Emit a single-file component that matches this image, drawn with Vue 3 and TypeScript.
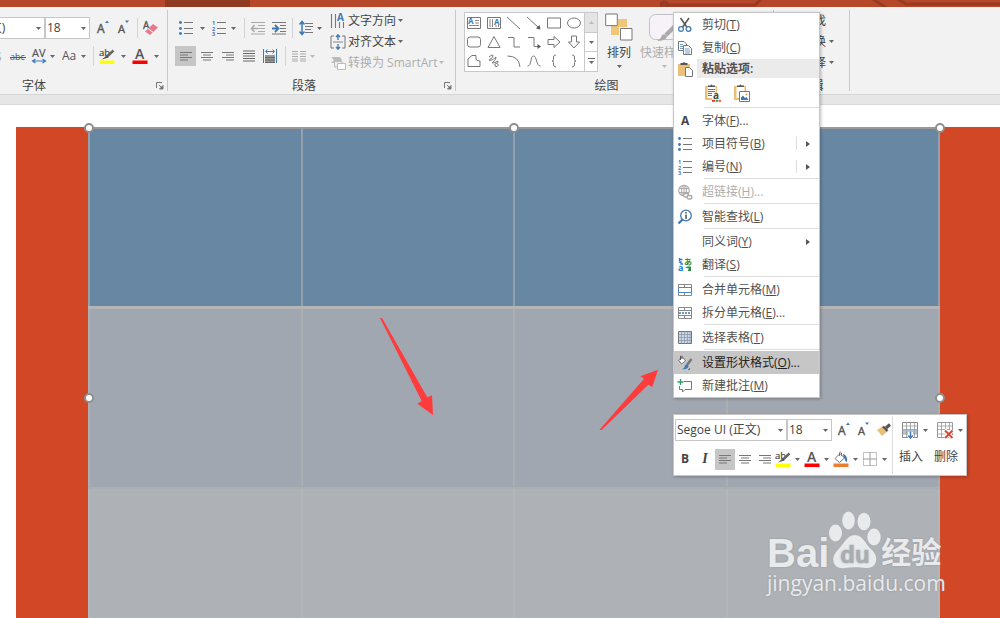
<script setup lang="ts">
import { h, ref } from 'vue'

interface Glyph { w: number; h: number; body: string }
interface MenuRow {
  kind: 'item' | 'header' | 'paste' | 'rule'
  label?: string
  key?: string
  tail?: string
  icon?: string
  sub?: boolean
  split?: boolean
  disabled?: boolean
  active?: boolean
}

const T = 'font-family="Open Sans, Noto Sans, sans-serif"'
const line = (y: number, a: number, b: number, c = '#777') =>
  `<path d="M${a} ${y}H${b}" stroke="${c}" fill="none"/>`
const g = (w: number, hh: number, body: string): Glyph => ({ w, h: hh, body })
const outline = (d: string) => g(16, 16, `<path d="${d}" fill="none" stroke="#777"/>`)

const glyphs: Record<string, Glyph> = {
  caret: g(5, 3, '<path d="M0 0H5L2.5 3Z" fill="#666"/>'),
  caretPale: g(5, 3, '<path d="M0 0H5L2.5 3Z" fill="#bbb"/>'),
  right: g(4, 6, '<path d="M0 0L4 3L0 6Z" fill="#555"/>'),
  launcher: g(8, 8, '<path d="M.5 6V.5H6" fill="none" stroke="#777"/><path d="M3 3L6 6M7 3.5V7H3.5Z" stroke="#777" fill="#777"/>'),
  grow: g(16, 16, `<text x="2" y="13" font-size="12" fill="#555" stroke="#555" stroke-width=".4" ${T}>A</text><path d="M10 3L12 .5L14 3Z" fill="#3f78b5"/>`),
  shrink: g(16, 16, `<text x="2" y="13" font-size="11" fill="#555" stroke="#555" stroke-width=".4" ${T}>A</text><path d="M9 .5H13L11 3Z" fill="#3f78b5"/>`),
  eraser: g(16, 16, `<text x="0" y="9" font-size="10" fill="#555" stroke="#555" stroke-width=".4" ${T}>A</text><path d="M2 11.5L10 4L15 7.500L7 15Z" fill="#e8788a"/><path d="M5 8.500L10 12.300" stroke="#fff"/>`),
  clipS: g(5, 16, `<text x="-5" y="13" font-size="12" fill="#aaa" ${T}>S</text>`),
  strike: g(16, 16, `<text x="0" y="12" font-size="9" fill="#555" ${T}>abc</text>${line(9.5, 0, 16, '#555')}`),
  spacingAV: g(16, 16, `<text x="1" y="9" font-size="11" fill="#555" stroke="#555" stroke-width=".2" ${T}>AV</text><path d="M2 13H14M4.5 11L1.5 13L4.5 15M11.5 11L14.5 13L11.5 15" fill="none" stroke="#3f78b5" stroke-width="1.2"/>`),
  caseAa: g(16, 16, `<text x="0" y="12" font-size="12" fill="#555" ${T}>Aa</text>`),
  highlight: g(16, 16, `<text x="0" y="8" font-size="9.5" fill="#444" stroke="#444" stroke-width=".2" ${T}>ab</text><path d="M14.5 2.500L7.500 9" stroke="#666" stroke-width="2.400"/><path d="M8 7L9.500 9.500L3 11.500Z" fill="#555"/><path d="M.5 12.500H15.500V16H.5Z" fill="#ff0"/>`),
  fontColor: g(16, 16, `<text x="3" y="11" font-size="14" font-weight="600" fill="#555" ${T}>A</text><path d="M.5 12.500H15.500V16H.5Z" fill="#f00"/>`),
  fill: g(16, 16, '<path d="M2 7.500L7 2.500L11.500 7L6.500 11.500Z" fill="#fff" stroke="#777"/><path d="M6.500 5V1.500Q7.500 .5 8.500 2V5" fill="none" stroke="#777"/><path d="M10 3Q14.500 4 14 10.500Q12.500 11.500 12 8.500L10.500 6Z" fill="#3f78b5"/><path d="M.5 12.500H15.500V16H.5Z" fill="#ed7d31"/>'),
  borders: g(16, 16, '<path d="M1.500 1.500H14.500V14.500H1.500Z" fill="none" stroke="#888" stroke-dasharray="1 1"/><path d="M8 1V15M1 8H15" stroke="#999"/>'),
  bullets: g(16, 16, [2.5, 8.5, 13.5].map(y => `<circle cx="2.500" cy="${y}" r="1.400" fill="#3f78b5"/>${line(y, 6, 15)}`).join('')),
  numbers: g(16, 16, [2.5, 8.5, 13.5].map((y, i) => `<text x="1" y="${y + 2}" font-size="5.500" font-weight="700" fill="#3f78b5" ${T}>${i + 1}</text>${line(y, 6, 15)}`).join('')),
  outdent: g(16, 16, line(2.5, 1, 15, '#aaa') + line(5.5, 8, 15, '#aaa') + line(8.5, 8, 15, '#aaa') + line(11.5, 8, 15, '#aaa') + line(14, 1, 15, '#aaa') + '<path d="M8 8.500H1.500M4.500 5L1.500 8.500L4.500 12" fill="none" stroke="#aaa" stroke-width="1.500"/>'),
  indent: g(16, 16, line(2.5, 1, 15) + line(5.5, 9, 15) + line(8.5, 9, 15) + line(11.5, 9, 15) + line(14, 1, 15) + '<path d="M1 8.500H7M4 5L7.500 8.500L4 12" fill="none" stroke="#3f78b5" stroke-width="1.800"/>'),
  lineGap: g(16, 16, '<path d="M4 2V14M1.500 4.500L4 1.500L6.500 4.500M1.500 11.500L4 14.500L6.500 11.500" fill="none" stroke="#3f78b5" stroke-width="1.500"/>' + [3.5, 6.5, 9.5, 12.5].map(y => line(y, 7, y === 9.5 ? 13 : 15)).join('')),
  left: g(16, 16, line(4.5, 2, 14) + line(7, 2, 10) + line(9.5, 2, 14) + line(12, 2, 10)),
  center: g(16, 16, line(4.5, 2, 14) + line(7, 4, 12) + line(9.5, 2, 14) + line(12, 4, 12)),
  alignRight: g(16, 16, line(4.5, 2, 14) + line(7, 6, 14) + line(9.5, 2, 14) + line(12, 6, 14)),
  justify: g(16, 16, [3, 5.5, 8, 10.5, 13].map(y => line(y, 2, 14, '#666')).join('')),
  distribute: g(16, 16, '<path d="M1.500 1V15M14.500 1V15M4 3.500H12M5.500 1.500L3.500 3.500L5.500 5.500M10.500 1.500L12.500 3.500L10.500 5.500" fill="none" stroke="#3f78b5"/><path d="M3 7H13V15H3Z" fill="#999"/>' + line(9.5, 3, 13, '#666') + line(12, 3, 13, '#666') + line(14.5, 3, 13, '#666')),
  columns: g(16, 16, [3.5, 6, 8.5, 11, 13].map(y => line(y, 1, 7, '#aaa') + line(y, 9, 15, '#aaa')).join('')),
  direction: g(16, 16, `<path d="M1.500 1V15M5.500 1V15M9.500 9V15M13.500 9V15" stroke="#777" stroke-width="1.100"/><text x="7" y="8" font-size="10" font-weight="700" fill="#3f78b5" ${T}>A</text>`),
  valign: g(16, 16, '<path d="M4 2H1V14H4M12 2H15V14H12" fill="none" stroke="#777"/><path d="M3 8H13" stroke="#888"/><path d="M8 1V6M8 10V15M6 3L8 .8L10 3M6 13L8 15.200L10 13" fill="none" stroke="#3f78b5" stroke-width="1.300"/>'),
  smart: g(16, 16, '<path d="M1 2H10L12 5L9 8H1L4 5Z" fill="#bbb"/><path d="M4.500 6.500H12V12H4.500Z" fill="#eee" stroke="#bbb"/><path d="M7.500 8.500H15.500V14.500H7.500Z" fill="#fff" stroke="#bbb"/>'),
  arrange: g(28, 28, '<path d="M13 6H22V14H14V22H6V13H13Z" fill="#f0c577"/><path d="M.7 1H12.300V12.600H.7Z" fill="#fff" stroke="#777"/><path d="M15.500 15.500H27V27H15.500Z" fill="#fff" stroke="#777"/>'),
  quick: g(32, 28, '<rect x="1.500" y="1.500" width="29" height="25" rx="6" fill="#f7f1f8" stroke="#c4bfc6"/><path d="M27 13L18 22" stroke="#aaa" stroke-width="4"/><path d="M9 28Q13 26 14 22Q18 20 19 24Q17 28 9 28Z" fill="#aaa"/>'),
  find: g(16, 16, '<circle cx="7" cy="7" r="4" fill="none" stroke="#666"/>'),
  up: g(5, 3, '<path d="M0 3L2.500 0L5 3Z" fill="#bbb"/>'),
  more: g(7, 7, '<path d="M0 .5H7" stroke="#666"/><path d="M1 3H6L3.500 6Z" fill="#666"/>'),
  cut: g(16, 16, '<path d="M3.500 1L10.500 11M12 1L5 11" stroke="#555" stroke-width="1.500"/><circle cx="4" cy="12" r="2.400" fill="#fff" stroke="#3f78b5" stroke-width="1.200"/><circle cx="11.500" cy="12" r="2.400" fill="#fff" stroke="#3f78b5" stroke-width="1.200"/>'),
  copy: g(16, 16, '<path d="M1.500 1.500H7L9.500 4V10.500H1.500Z" fill="#fff" stroke="#777"/><path d="M3 4.500H6M3 6.500H6M3 8.500H6" stroke="#6f9bc9"/><path d="M6.500 5.500H11.500L14.500 8.500V14.500H6.500Z" fill="#fff" stroke="#777"/><path d="M8 9H12.500M8 11H13M8 13H13" stroke="#6f9bc9"/>'),
  paste: g(16, 16, '<path d="M1 3H13V15H1Z" fill="#eabf78"/><path d="M3.500 4V2H6Q7 0 8 2H10.500V4Z" fill="#555"/><path d="M8.500 6.500H12.500L15.500 9.500V15.500H8.500Z" fill="#fff" stroke="#777"/>'),
  pasteText: g(18, 18, `<path d="M2 2H14V16H2Z" fill="#eabf78"/><path d="M4.500 3H12.500V14H4.500Z" fill="#fff"/><path d="M5 3V1.500H7.500Q8.500 -.5 9.500 1.500H12V3Z" fill="#555"/>${line(5.5, 5, 12, '#3f78b5')}${line(7.5, 5, 12, '#3f78b5')}${line(9.5, 5, 10, '#3f78b5')}${line(11.5, 5, 9, '#3f78b5')}<path d="M9 9H18V18H9Z" fill="#fff"/><text x="10" y="15" font-size="10" font-weight="700" fill="#444" ${T}>a</text><path d="M9 16.800H12" stroke="#d24726" stroke-width="2"/><path d="M12.500 16.800H15" stroke="#3aa655" stroke-width="2"/><path d="M15.500 16.800H18" stroke="#e8642c" stroke-width="2"/>`),
  pastePic: g(18, 18, '<path d="M2 2H14V16H2Z" fill="#eabf78"/><path d="M4.500 3H12.500V14H4.500Z" fill="#fff"/><path d="M5 3V1.500H7.500Q8.500 -.5 9.500 1.500H12V3Z" fill="#555"/><path d="M7.500 7.500H17.500V17.500H7.500Z" fill="#fff" stroke="#777"/><path d="M9 16V13.500L11 11.500L13 14L14.500 13L16.500 16Z" fill="#3f78b5"/><circle cx="14.500" cy="10.500" r="1" fill="#e8a24c"/>'),
  boldA: g(16, 16, `<text x="4" y="12" font-size="12" font-weight="700" fill="#444" ${T}>A</text>`),
  link: g(16, 16, '<g fill="none" stroke="#aaa" stroke-width="1.100"><circle cx="7" cy="6.500" r="5.300"/><ellipse cx="7" cy="6.500" rx="2.400" ry="5.300"/><path d="M2 4.500H12M2 8.500H12M7 1V12"/></g><g fill="#fff" stroke="#aaa" stroke-width="1.400"><rect x="6.500" y="9.500" width="5" height="3.500" rx="1.700"/><rect x="10" y="11.500" width="5" height="3.500" rx="1.700"/></g>'),
  lookup: g(16, 16, '<circle cx="9" cy="6.500" r="5.300" fill="#fff" stroke="#3f78b5" stroke-width="1.300"/><path d="M5.500 10.500L1.500 14.500" stroke="#3f78b5" stroke-width="2.300"/><path d="M9 5.500V10M9 3V4.500" stroke="#444" stroke-width="1.400"/>'),
  translate: g(16, 16, `<text x="1" y="14" font-size="9" font-weight="700" fill="#1d7fd0" ${T}>a</text><text x="7" y="8" font-size="8" font-weight="700" fill="#2a8a3c" font-family="Noto Sans CJK SC">あ</text><path d="M2 2.500H5.500M2 5H4V7H6M2.500 1V4" stroke="#1d7fd0" fill="none" stroke-width="1.300"/><path d="M8 10.500L10.500 9.500H14V14H10.500L12 11.500Z" fill="#2a8a3c"/>`),
  merge: g(16, 16, '<path d="M1.500 2.500H14.500V13.500H1.500ZM7.500 2.500V5.500M7.500 10.500V13.500" fill="none" stroke="#888"/><path d="M1.500 5.500H14.500V10.500H1.500Z" fill="#fff" stroke="#4a88c6"/>'),
  splitCells: g(16, 16, '<path d="M1.500 2.500H14.500V13.500H1.500ZM7.500 2.500V6M7.500 10V13.500M1.500 5.500H14.500M1.500 10.500H14.500" fill="none" stroke="#888"/><path d="M2 8H14" stroke="#3f78b5" stroke-width="1.600" stroke-dasharray="2 1"/>'),
  grid: g(16, 16, '<path d="M1.500 1.500H14.500V13.500H1.500Z" fill="#c8d8e8" stroke="#777"/><path d="M4.500 2V13M7.500 2V13M10.500 2V13M13 2V13M2 4.500H14M2 7.500H14M2 10.500H14" stroke="#8d9bab" stroke-width=".8"/>'),
  format: g(16, 16, '<path d="M1.500 5L5.500 2L8.500 6L4.500 9Z" fill="#fff" stroke="#777"/><path d="M3.500 5V.8M5 4V.8" stroke="#555"/><path d="M14.500 4L10 10" stroke="#777" stroke-width="2.500"/><path d="M5 14Q8 13 8 10Q11 8.500 11.500 11.500Q10 15 5 14Z" fill="#3f78b5"/><path d="M12 13Q14 15 11 14.500" stroke="#3f78b5" fill="none"/>'),
  comment: g(16, 16, '<path d="M7 3.500H14.500V11.500H8L5.500 14V11.500H2.500V8" fill="#fff" stroke="#777"/><path d="M3.500 1V7M.5 4H6.500" stroke="#2f9e6e" stroke-width="1.400"/>'),
  brush: g(16, 16, '<path d="M1 8L7 4L12 9L6 14Z" fill="#eabf78"/><path d="M7 4.500L11.500 9" stroke="#555" stroke-width="2.400"/><path d="M10 6L14 2.500" stroke="#555" stroke-width="3"/>'),
  insert: g(18, 18, '<path d="M1.500 1.500H16.500V16.500H1.500Z" fill="#fff" stroke="#888"/><path d="M2 8.500H16V13H2Z" fill="#a9c8e8"/><path d="M5.500 1V17M9.500 1V17M13.500 1V17M1 5H17M1 8.500H17M1 13H17" stroke="#999" stroke-width=".8"/><path d="M7 11H12V17H7Z" fill="#fff"/><path d="M9.500 11V17M7 14.500L9.500 17L12 14.500" fill="none" stroke="#3f78b5" stroke-width="1.500"/>'),
  remove: g(18, 18, '<path d="M1.500 1.500H16.500V16.500H1.500Z" fill="#fff" stroke="#999"/><path d="M5.500 1V17M9.500 1V17M13.500 1V17M1 5H17M1 8.500H17M1 13H17" stroke="#999" stroke-width=".8"/><path d="M8.500 9L16.500 17M16.500 9L8.500 17" stroke="#fff" stroke-width="4"/><path d="M9 9.500L16.500 17M16.500 9.500L9 17" stroke="#d9482b" stroke-width="2"/>'),
}

const textBox = g(16, 16, `<path d="M1.500 2.500H14.500V13.500H1.500Z" fill="#fff" stroke="#777"/><text x="2" y="9" font-size="8" font-weight="700" fill="#3f78b5" ${T}>A</text><path d="M9 5.500H13M9 8H13M3 10.500H13" stroke="#888"/>`)
const textBoxV = g(16, 16, `<path d="M1.500 2.500H14.500V13.500H1.500Z" fill="#fff" stroke="#777"/><text x="8" y="10" font-size="8" font-weight="700" fill="#3f78b5" ${T}>A</text><path d="M4 4V12M6.500 4V12M10 10V12M12.500 10V12" stroke="#888"/>`)

const shapes: { name: string; glyph: Glyph }[] = [
  { name: '文本框', glyph: textBox },
  { name: '竖排文本框', glyph: textBoxV },
  { name: '直线', glyph: outline('M1 2L14 14') },
  { name: '箭头', glyph: g(16, 16, '<path d="M1 2L13 13" stroke="#777"/><path d="M14.500 14.500L13.500 10L10 13.500Z" fill="#555"/>') },
  { name: '矩形', glyph: outline('M1.500 3H14.500V13H1.500Z') },
  { name: '椭圆', glyph: outline('M1.500 8A6.500 5 0 0 1 14.500 8A6.500 5 0 0 1 1.500 8Z') },
  { name: '圆角矩形', glyph: outline('M4 3H12Q14.500 3 14.500 5.500V10.500Q14.500 13 12 13H4Q1.500 13 1.500 10.500V5.500Q1.500 3 4 3Z') },
  { name: '三角形', glyph: outline('M8 2.500L14 13.500H2Z') },
  { name: '肘形连接符', glyph: outline('M2 3.500H8V13H14') },
  { name: '肘形箭头', glyph: g(16, 16, '<path d="M2 3.500H8V12.500H13" fill="none" stroke="#777"/><path d="M15 12.500L11.500 10V15Z" fill="#555"/>') },
  { name: '右箭头', glyph: outline('M2 5.500H8V2.500L14 8L8 13.500V10.500H2Z') },
  { name: '下箭头', glyph: outline('M5.500 2H10.500V8H13.500L8 14L2.500 8H5.500Z') },
  { name: '任意多边形', glyph: outline('M2 13.500V6L6 2.500H10V6Q10 8 14 8V13.500Z') },
  { name: '自由曲线', glyph: outline('M3 4Q7 .5 7 3Q6 6 3 7Q5 8.500 10 4Q11 6 6 10Q9 10 12 8Q13 10 9 11Q8 14 11 13.500Q14 12 11 10.500') },
  { name: '弧形', glyph: outline('M1.500 3Q13 3 14 14') },
  { name: '曲线', glyph: outline('M1.500 13C6 13 4 3 7.500 3S10 13 14.500 13') },
  { name: '左大括号', glyph: outline('M10 2Q7.500 2 7.500 4V6.500Q7.500 8 6 8Q7.500 8 7.500 9.500V12Q7.500 14 10 14') },
  { name: '右大括号', glyph: outline('M6 2Q8.500 2 8.500 4V6.500Q8.500 8 10 8Q8.500 8 8.500 9.500V12Q8.500 14 6 14') },
]

const menu: MenuRow[] = [
  { kind: 'item', label: '剪切', key: 'T', icon: 'cut' },
  { kind: 'item', label: '复制', key: 'C', icon: 'copy' },
  { kind: 'header', label: '粘贴选项:', icon: 'paste' },
  { kind: 'paste' },
  { kind: 'rule' },
  { kind: 'item', label: '字体', key: 'F', tail: '...', icon: 'boldA' },
  { kind: 'item', label: '项目符号', key: 'B', icon: 'bullets', sub: true, split: true },
  { kind: 'item', label: '编号', key: 'N', icon: 'numbers', sub: true, split: true },
  { kind: 'rule' },
  { kind: 'item', label: '超链接', key: 'H', tail: '...', icon: 'link', disabled: true },
  { kind: 'rule' },
  { kind: 'item', label: '智能查找', key: 'L', icon: 'lookup' },
  { kind: 'rule' },
  { kind: 'item', label: '同义词', key: 'Y', sub: true },
  { kind: 'item', label: '翻译', key: 'S', icon: 'translate' },
  { kind: 'rule' },
  { kind: 'item', label: '合并单元格', key: 'M', icon: 'merge' },
  { kind: 'item', label: '拆分单元格', key: 'E', tail: '...', icon: 'splitCells' },
  { kind: 'rule' },
  { kind: 'item', label: '选择表格', key: 'T', icon: 'grid' },
  { kind: 'rule' },
  { kind: 'item', label: '设置形状格式', key: 'O', tail: '...', icon: 'format', active: true },
  { kind: 'item', label: '新建批注', key: 'M', icon: 'comment' },
]

const handles = ['top-left', 'top-mid', 'top-right', 'mid-left', 'mid-right']
const family = ref('Segoe UI (正文)')
const size = ref('18')

const Icon = (props: { name?: string; glyph?: Glyph }) => {
  const item = props.glyph ?? glyphs[props.name ?? 'caret']
  return h('svg', {
    width: item.w,
    height: item.h,
    viewBox: `0 0 ${item.w} ${item.h}`,
    'aria-hidden': 'true',
    innerHTML: item.body,
  })
}
Icon.props = ['name', 'glyph']
</script>

<template>
  <div class="app">
    <div class="titlebar">
      <div class="tab-shade"></div>
      <svg class="pattern" width="340" height="7" viewBox="0 0 340 7" aria-hidden="true">
        <g fill="none" stroke="#983b23" stroke-width="3">
          <path d="M0 5H95L103 -3" /><circle cx="4" cy="6" r="4" />
          <path d="M210 -3L228 9M236 -2L246 4H340" />
        </g>
      </svg>
    </div>

    <header class="ribbon">
      <section class="group font-group">
        <div class="rows">
          <div class="row">
            <div class="combos">
              <label class="combo off-left">
                <select v-model="family" aria-label="字体名称"><option>Segoe UI (正文)</option></select>
                <Icon name="caret" />
              </label>
              <label class="combo size">
                <select v-model="size" aria-label="字号"><option>18</option></select>
                <Icon name="caret" />
              </label>
            </div>
            <button class="tool" aria-label="增大字号"><Icon name="grow" /></button>
            <button class="tool" aria-label="减小字号"><Icon name="shrink" /></button>
            <i class="bar"></i>
            <button class="tool" aria-label="清除格式"><Icon name="eraser" /></button>
          </div>
          <div class="row low">
            <button class="tool" aria-label="阴影"><Icon name="clipS" /></button>
            <button class="tool" aria-label="删除线"><Icon name="strike" /></button>
            <button class="split tight" aria-label="字符间距"><Icon name="spacingAV" /><span><Icon name="caret" /></span></button>
            <button class="split tight" aria-label="更改大小写"><Icon name="caseAa" /><span><Icon name="caret" /></span></button>
            <i class="bar"></i>
            <div class="pair">
              <button class="split" aria-label="突出显示"><Icon name="highlight" /><span><Icon name="caret" /></span></button>
              <button class="split" aria-label="字体颜色"><Icon name="fontColor" /><span><Icon name="caret" /></span></button>
            </div>
          </div>
        </div>
        <footer class="caption start">
          <span>字体</span>
          <button class="launch" aria-label="字体设置"><Icon name="launcher" /></button>
        </footer>
      </section>

      <section class="group para-group">
        <div class="body">
          <div class="rows para-rows">
            <div class="row inset">
              <div class="pair">
                <button class="split" aria-label="项目符号"><Icon name="bullets" /><span><Icon name="caret" /></span></button>
                <button class="split mid" aria-label="编号"><Icon name="numbers" /><span><Icon name="caret" /></span></button>
              </div>
              <i class="bar"></i>
              <button class="tool" aria-label="降低列表级别"><Icon name="outdent" /></button>
              <button class="tool" aria-label="提高列表级别"><Icon name="indent" /></button>
              <i class="bar"></i>
              <button class="split tight" aria-label="行距"><Icon name="lineGap" /><span><Icon name="caret" /></span></button>
            </div>
            <div class="row low inset-small">
              <div class="aligns">
                <button class="align on" aria-label="左对齐"><Icon name="left" /></button>
                <button class="align" aria-label="居中"><Icon name="center" /></button>
                <button class="align" aria-label="右对齐"><Icon name="alignRight" /></button>
                <button class="align" aria-label="两端对齐"><Icon name="justify" /></button>
                <button class="align" aria-label="分散对齐"><Icon name="distribute" /></button>
              </div>
              <i class="bar"></i>
              <button class="split tight" aria-label="分栏"><Icon name="columns" /><span><Icon name="caretPale" /></span></button>
            </div>
          </div>
          <div class="stack">
            <button class="wide"><Icon name="direction" /><span>文字方向</span><Icon name="caret" /></button>
            <button class="wide"><Icon name="valign" /><span>对齐文本</span><Icon name="caret" /></button>
            <button class="wide" disabled><Icon name="smart" /><span>转换为 SmartArt</span><Icon name="caretPale" /></button>
          </div>
        </div>
        <footer class="caption">
          <span>段落</span>
          <button class="launch" aria-label="段落设置"><Icon name="launcher" /></button>
        </footer>
      </section>

      <section class="group draw-group">
        <div class="body">
          <div class="gallery">
            <div class="shapes">
              <button v-for="s in shapes" :key="s.name" class="shape" :aria-label="s.name"><Icon :glyph="s.glyph" /></button>
            </div>
            <div class="scroller">
              <button class="dim" aria-label="上一行"><Icon name="up" /></button>
              <button aria-label="下一行"><Icon name="caret" /></button>
              <button aria-label="其他"><Icon name="more" /></button>
            </div>
          </div>
          <button class="big"><Icon name="arrange" /><span>排列</span><Icon name="caret" /></button>
          <button class="big" disabled><Icon name="quick" /><span>快速样式</span><Icon name="caretPale" /></button>
        </div>
        <footer class="caption"><span>绘图</span></footer>
      </section>

      <section class="group edit-group">
        <div class="stack">
          <button class="wide"><Icon name="find" /><span>查找</span></button>
          <button class="wide"><Icon name="find" /><span>替换</span><Icon name="caret" /></button>
          <button class="wide"><Icon name="find" /><span>选择</span><Icon name="caret" /></button>
        </div>
        <footer class="caption full"><span>编辑</span></footer>
      </section>
    </header>
    <div class="shelf"></div>

    <main class="workspace">
      <div class="slide">
        <div class="table-frame">
          <table class="grid" aria-label="幻灯片表格">
            <tbody>
              <tr v-for="r in 3" :key="r" :class="'tone-' + r"><td v-for="c in 4" :key="c"></td></tr>
            </tbody>
          </table>
          <i v-for="p in handles" :key="p" class="handle" :class="p"></i>
        </div>
      </div>
    </main>

    <svg class="arrows" width="300" height="120" viewBox="370 310 300 120" aria-hidden="true">
      <g fill="#ff3b3b">
        <path d="M380 318L382 318L427.300 397.300L432 395.300L433 415L417.300 403.700L421.700 401Z" />
        <path d="M598.500 431L644 378.700L640.300 376.300L658 369.700L652.300 387L648.300 384.700L599.500 432Z" />
      </g>
    </svg>

    <div class="watermark">
      <div class="brand">
        <span class="bai">Bai</span>
        <svg class="paw" width="52" height="58" viewBox="0 0 52 58" aria-hidden="true">
          <g fill="#e8eaec">
            <ellipse cx="6.500" cy="22" rx="6.500" ry="8.500" /><ellipse cx="19.500" cy="9.500" rx="6.300" ry="9" />
            <ellipse cx="35" cy="10.500" rx="6.500" ry="8.700" /><ellipse cx="45" cy="26" rx="6.700" ry="8.500" />
            <path d="M26 24C34 24 36 33 43 39C51 47 47 58 37 57C31 56 22 56 16 57C4 59 1 47 8 40C15 33 18 24 26 24Z" />
          </g>
          <text x="26" y="52" text-anchor="middle" font-family="Liberation Sans, sans-serif" font-weight="700" font-size="24" fill="#a9adb2">du</text>
        </svg>
        <span class="jing">经验</span>
      </div>
      <div class="site">jingyan.baidu.com</div>
    </div>

    <div class="menu" role="menu">
      <template v-for="(m, i) in menu" :key="i">
        <div v-if="m.kind === 'rule'" class="rule"></div>
        <div v-else-if="m.kind === 'header'" class="head"><span class="slot"><Icon :name="m.icon" /></span><b>{{ m.label }}</b></div>
        <div v-else-if="m.kind === 'paste'" class="paste">
          <button aria-label="只保留文本"><Icon name="pasteText" /></button>
          <button aria-label="图片"><Icon name="pastePic" /></button>
        </div>
        <button v-else class="entry" :class="{ active: m.active }" :disabled="m.disabled" role="menuitem">
          <span class="slot"><Icon v-if="m.icon" :name="m.icon" /></span>
          <span class="words">{{ m.label }}(<u>{{ m.key }}</u>){{ m.tail }}</span>
          <span v-if="m.sub" class="sub" :class="{ lined: m.split }"><Icon name="right" /></span>
        </button>
      </template>
    </div>

    <div class="mini">
      <div class="mini-left">
        <div class="mini-row">
          <label class="combo face">
            <select v-model="family" aria-label="浮动工具栏字体"><option>Segoe UI (正文)</option></select>
            <Icon name="caret" />
          </label>
          <label class="combo size">
            <select v-model="size" aria-label="浮动工具栏字号"><option>18</option></select>
            <Icon name="caret" />
          </label>
          <div class="mini-tools">
            <button class="cell" aria-label="增大字号"><Icon name="grow" /></button>
            <button class="cell" aria-label="减小字号"><Icon name="shrink" /></button>
            <button class="cell" aria-label="格式刷"><Icon name="brush" /></button>
          </div>
        </div>
        <div class="mini-row">
          <button class="cell bold">B</button>
          <button class="cell italic">I</button>
          <button class="cell on" aria-label="左对齐"><Icon name="left" /></button>
          <button class="cell" aria-label="居中"><Icon name="center" /></button>
          <button class="cell" aria-label="右对齐"><Icon name="alignRight" /></button>
          <button class="split mini-split" aria-label="突出显示"><Icon name="highlight" /><span><Icon name="caret" /></span></button>
          <button class="split mini-split" aria-label="字体颜色"><Icon name="fontColor" /><span><Icon name="caret" /></span></button>
          <button class="split mini-split" aria-label="填充"><Icon name="fill" /><span><Icon name="caret" /></span></button>
          <button class="split mini-split" aria-label="边框"><Icon name="borders" /><span><Icon name="caret" /></span></button>
        </div>
      </div>
      <div class="mini-right">
        <button class="act"><span class="act-top"><Icon name="insert" /><Icon name="caret" /></span><span>插入</span></button>
        <button class="act"><span class="act-top"><Icon name="remove" /><Icon name="caret" /></span><span>删除</span></button>
      </div>
    </div>
  </div>
</template>

<style>
body { margin: 0; }
</style>

<style scoped>
.app {
  position: relative;
  display: flex;
  flex-direction: column;
  height: 100vh;
  overflow: hidden;
  background: #fff;
  color: #444;
  font: 12px/16px "Open Sans", "Noto Sans", "Noto Sans CJK SC", sans-serif;
}
button {
  display: flex;
  align-items: center;
  padding: 0;
  border: 0;
  background: none;
  color: inherit;
  font: inherit;
  white-space: nowrap;
}
button:disabled { color: #adadad; }
.app :deep(svg) { display: block; flex: none; }

.titlebar { position: relative; flex: none; height: 7px; background: #b7472a; overflow: hidden; }
.tab-shade { width: 85px; height: 7px; margin-left: 165px; background: #903a22; }
.pattern { position: absolute; top: 0; right: 0; }

.ribbon {
  display: flex;
  flex: none;
  padding: 3px 0;
  overflow: hidden;
  background: #f2f2f2;
  border-bottom: 1px solid #d6d6d6;
}
.group { display: flex; flex: none; flex-direction: column; height: 81px; border-right: 1px solid #c8c8c8; }
.font-group { width: 167px; overflow: hidden; }
.para-group { width: 287px; }
.draw-group { width: 317px; }
.edit-group { width: 75px; }
.body { display: flex; }
.rows { display: flex; flex-direction: column; gap: 7px; height: 62px; padding-top: 7px; }
.para-rows { width: 162px; }
.row { display: flex; align-items: center; gap: 5px; height: 22px; }
.low { height: 20px; }
.inset { padding-left: 10px; }
.inset-small { padding-left: 7px; }
.combos, .aligns { display: flex; }
.pair { display: flex; gap: 1px; }
.bar { width: 1px; height: 20px; background: #d4d4d4; }
.split > span { display: flex; justify-content: center; width: 16px; }
.tight > span { width: 10px; }
.mid > span { width: 12px; }
.align { justify-content: center; width: 21px; height: 20px; }
.on { background: #c6c6c6; }

.combo { position: relative; display: block; flex: none; height: 22px; }
.combo select {
  appearance: none;
  box-sizing: border-box;
  width: 100%;
  height: 22px;
  padding: 0 1px;
  border: 1px solid #c6c6c6;
  border-radius: 0;
  background: #fff;
  color: #444;
  font: inherit;
}
.combo :deep(svg) { position: absolute; right: 4px; top: 10px; pointer-events: none; }
.off-left { width: 127px; margin-left: -82px; }
.off-left select { padding-left: 3px; }
.size { width: 45px; }
.face { width: 112px; }

.caption { display: flex; justify-content: center; align-items: center; height: 10px; margin-top: auto; padding-right: 16px; line-height: 10px; }
.caption.start { justify-content: space-between; padding: 0 3px 0 22px; }
.full { padding-right: 0; }
.para-group .caption { padding: 0 3px 0 124px; justify-content: space-between; }
.stack { display: flex; flex-direction: column; height: 69px; }
.wide { gap: 2px; height: 21px; }
.edit-group .stack { padding-left: 9px; }
.edit-group .wide { gap: 3px; }

.gallery { display: flex; height: 58px; margin: 2px 0 0 8px; border: 1px solid #c9c9c9; background: #fff; }
.shapes { display: grid; grid-template-columns: repeat(6, 20px); width: 119px; }
.shape { width: 18px; justify-content: center; }
.scroller { display: flex; flex-direction: column; width: 12px; border-left: 1px solid #c9c9c9; background: #fff; }
.scroller button { flex: 1; justify-content: center; border-bottom: 1px solid #c9c9c9; }
.scroller button:last-child { border-bottom: 0; }
.scroller .dim { background: #e4e4e4; }
.draw-group .body { height: 69px; }
.big { flex-direction: column; width: 48px; padding-top: 3px; gap: 4px; }
.big:nth-child(2) { width: 42px; }
.big span { line-height: 16px; }

.shelf { flex: none; height: 9px; background: #e6e6e6; border-bottom: 1px solid #d9d9d9; }

.workspace { flex: 1; min-height: 0; padding: 22px 0 0 16px; overflow: hidden; }
.slide { height: 600px; padding: 0 60px 0 72px; background: #d24726; }
.table-frame { position: relative; }
.grid { width: 100%; table-layout: fixed; border-collapse: collapse; }
.grid td { height: 178px; padding: 0; border: 2px solid #acafb2; }
.grid .tone-1 td { height: 177px; background: #6887a3; border-color: #94a0ad; border-bottom: 3px solid #b5b5b8; border-top-color: #999; }
.grid .tone-2 td { background: #a1a7b1; }
.grid .tone-3 td { background: #aeb1b5; border-color: #b4b6b8; }
.handle {
  position: absolute;
  box-sizing: border-box;
  width: 10px;
  height: 10px;
  border: 2px solid #8e8e8e;
  border-radius: 50%;
  background: #fff;
  transform: translate(-50%, -50%);
}
.top-left, .top-mid, .top-right { top: 1px; }
.mid-left, .mid-right { top: 50%; }
.top-left, .mid-left { left: 1px; }
.top-mid { left: 50%; }
.top-right, .mid-right { left: 100%; }

.arrows { position: absolute; left: 370px; top: 310px; }

.watermark { position: absolute; left: 767px; top: 511px; color: #e8eaec; text-shadow: 0 0 2px #8f9399; }
.brand { display: flex; align-items: flex-end; height: 58px; }
.bai { font: 700 40px/32px "Liberation Sans", sans-serif; }
.jing { font: 700 30px/38px "Noto Sans CJK SC", sans-serif; }
.site { font: 21px/28px "Open Sans", sans-serif; }

.menu {
  position: absolute;
  left: 673px;
  top: 12px;
  box-sizing: border-box;
  width: 147px;
  border: 1px solid #c6c6c6;
  background: #fff;
  box-shadow: 1px 1px 3px rgba(0, 0, 0, 0.25);
  color: #505050;
}
.entry { width: 100%; height: 23px; }
.slot { display: flex; justify-content: center; width: 22px; }
.words { flex: 1; padding-left: 6px; text-align: left; }
.active { background: #c6c6c6; color: #222; }
.sub { display: flex; align-items: center; justify-content: center; width: 22px; height: 13px; }
.lined { border-left: 1px solid #ddd; }
.head { display: flex; align-items: center; height: 19px; }
.head b { flex: 1; margin-left: 1px; padding-left: 5px; background: #ebebeb; font-weight: 600; line-height: 19px; }
.paste { display: flex; gap: 11px; height: 29px; padding-left: 29px; }
.rule { height: 1px; margin: 0 0 1px 30px; background: #dedede; }

.mini {
  position: absolute;
  left: 673px;
  top: 414px;
  box-sizing: border-box;
  display: flex;
  height: 62px;
  padding: 1px;
  border: 1px solid #c6c6c6;
  background: #fff;
  box-shadow: 1px 1px 3px rgba(0, 0, 0, 0.25);
}
.mini-left { display: flex; flex-direction: column; gap: 7px; width: 217px; padding-top: 3px; border-right: 1px solid #ddd; }
.mini-row { display: flex; align-items: center; height: 22px; }
.mini-tools { display: flex; margin-left: 2px; }
.cell { justify-content: center; width: 20px; height: 21px; flex: none; }
.mini-split { flex: none; }
.mini-split > span { width: 13px; }
.bold { font-weight: 700; }
.italic { font: italic 700 14px "Liberation Serif", serif; }
.mini-right { display: flex; gap: 4px; padding-left: 6px; }
.act { flex-direction: column; gap: 10px; width: 31px; padding-top: 5px; align-items: flex-start; }
.act-top { display: flex; align-items: center; gap: 4px; padding-left: 2px; }
</style>
